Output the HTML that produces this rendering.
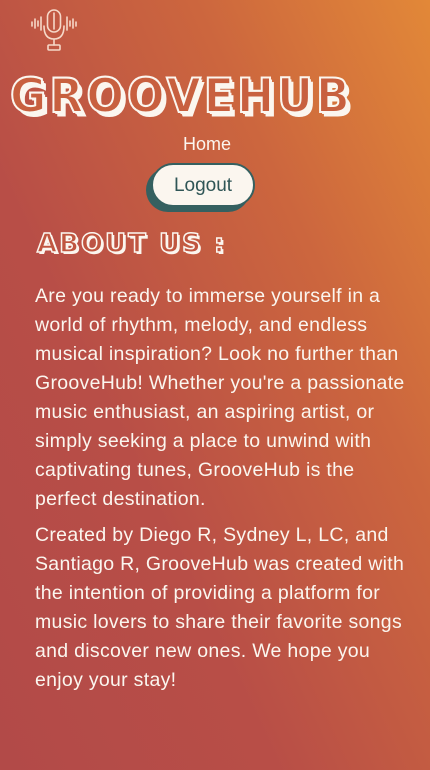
<!DOCTYPE html>
<html><head><meta charset="utf-8"><style>
html,body{margin:0;padding:0}
body{width:430px;height:770px;overflow:hidden;position:relative;background:linear-gradient(65deg,#b24a48 0%,#b84e47 35%,#cc663e 70%,#e28838 100%);font-family:"Liberation Sans",sans-serif;color:#fbf6ef}
.title{position:absolute;left:10px;top:68px;font-size:45px;font-weight:bold;letter-spacing:3px;color:#c8603f;-webkit-text-stroke:2px #fbf6ef;text-shadow:2px 2px 0 #fbf6ef,4px 4px 0 #fbf6ef;font-family:"DejaVu Sans","Liberation Sans",sans-serif;transform:scale(0.985,1.05);transform-origin:left top}
.home{position:absolute;left:183px;top:134px;font-size:18px}
.btn{position:absolute;left:151px;top:163px;width:104px;height:44px;border-radius:22px;background:#fbf6ef;border:2px solid #356060;box-shadow:-5px 5px 0 #356060;color:#2f5556;font-size:19px;text-align:center;line-height:42px;box-sizing:border-box}
.about{position:absolute;left:37px;top:229px;font-size:26px;font-weight:bold;letter-spacing:2px;color:#c05640;-webkit-text-stroke:1.5px #fbf6ef;text-shadow:2px 2px 0 #fbf6ef;font-family:"DejaVu Sans",sans-serif}
p{position:absolute;left:35px;margin:0;font-size:19.5px;line-height:29px;white-space:nowrap;letter-spacing:0.3px}
</style></head><body>
<svg style="position:absolute;left:28px;top:8px" width="56" height="46" viewBox="0 0 56 46" fill="none" stroke="#f6d8c8" stroke-width="1.6" stroke-linecap="round">
<rect x="19.5" y="2" width="13" height="22" rx="6.5"/>
<line x1="26" y1="5" x2="26" y2="21"/>
<path d="M16 18 Q16 31 26 31 Q36 31 36 18"/>
<line x1="26" y1="31" x2="26" y2="37"/>
<rect x="20" y="37" width="12" height="5" rx="1"/>
<line x1="4" y1="14" x2="4" y2="18"/><line x1="7" y1="11" x2="7" y2="20"/><line x1="10" y1="13" x2="10" y2="18"/><line x1="13" y1="9" x2="13" y2="22"/>
<line x1="39" y1="9" x2="39" y2="22"/><line x1="42" y1="13" x2="42" y2="18"/><line x1="45" y1="11" x2="45" y2="20"/><line x1="48" y1="14" x2="48" y2="18"/>
</svg>
<div class="title">GROOVEHUB</div>
<div class="home">Home</div>
<div class="btn">Logout</div>
<div class="about">ABOUT US :</div>
<p style="top:282px">Are you ready to immerse yourself in a<br>world of rhythm, melody, and endless<br>musical inspiration? Look no further than<br>GrooveHub! Whether you're a passionate<br>music enthusiast, an aspiring artist, or<br>simply seeking a place to unwind with<br>captivating tunes, GrooveHub is the<br>perfect destination.</p>
<p style="top:521px">Created by Diego R, Sydney L, LC, and<br>Santiago R, GrooveHub was created with<br>the intention of providing a platform for<br>music lovers to share their favorite songs<br>and discover new ones. We hope you<br>enjoy your stay!</p>
</body></html>
